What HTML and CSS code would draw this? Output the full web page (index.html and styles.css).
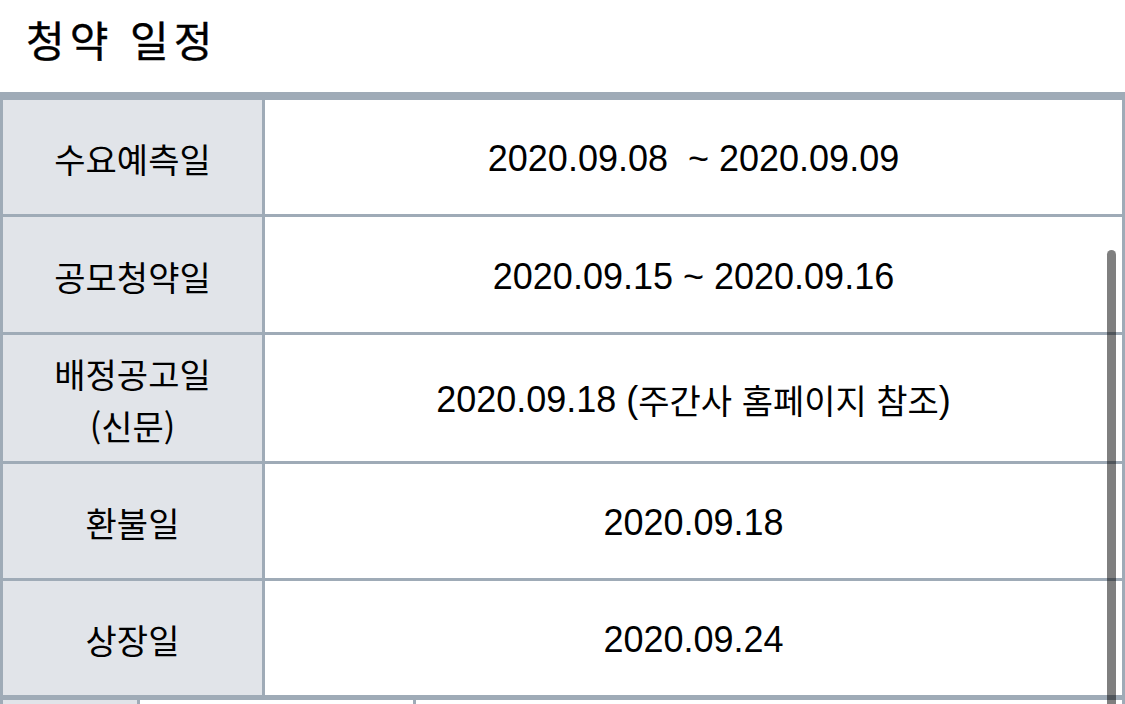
FILE: index.html
```html
<!DOCTYPE html>
<html lang="ko">
<head>
<meta charset="utf-8">
<title>청약 일정</title>
<link rel="stylesheet" href="styles.css">
</head>
<body>
<h1 class="title">청약 일정</h1>
<div class="schedule">
  <div class="cell label r1">수요예측일</div>
  <div class="cell value r1">2020.09.08&nbsp; ~ 2020.09.09</div>
  <div class="cell label r2">공모청약일</div>
  <div class="cell value r2">2020.09.15 ~ 2020.09.16</div>
  <div class="cell label r3">배정공고일<br>(신문)</div>
  <div class="cell value r3">2020.09.18 (<span class="ko">주간사 홈페이지 참조</span>)</div>
  <div class="cell label r4">환불일</div>
  <div class="cell value r4">2020.09.18</div>
  <div class="cell label r5">상장일</div>
  <div class="cell value r5">2020.09.24</div>
</div>
<div class="next">
  <div class="cell label"></div>
  <div class="cell value"></div>
  <div class="cell value"></div>
</div>
<div class="scrollbar"></div>
</body>
</html>
```

FILE: styles.css
```css
html, body {
  margin: 0;
  padding: 0;
  overflow: hidden;
  background: #ffffff;
  color: #000000;
}

.title {
  margin: 0;
  height: 92px;
  padding-left: 26px;
  font-family: "Noto Sans CJK KR", sans-serif;
  font-size: 42px;
  font-weight: 400;
  line-height: 78px;
  letter-spacing: 5px;
  -webkit-text-stroke: 0.4px #000;
}

.schedule {
  display: grid;
  grid-template-columns: 259px 1fr;
  grid-template-rows: 114px 115px 126px 114px 114px;
  gap: 3px;
  padding: 8px 3px 0 3px;
  background: #9fabb7;
}

.cell {
  display: flex;
  align-items: center;
  justify-content: center;
  text-align: center;
  padding-top: 4px;
  box-sizing: border-box;
  line-height: 52px;
}

.label {
  background: #e1e4e9;
  font-family: "Noto Sans CJK KR", sans-serif;
  font-size: 34px;
  letter-spacing: 0;
}

.value {
  background: #ffffff;
  font-family: "Liberation Sans", "Noto Sans CJK KR", sans-serif;
  font-size: 36px;
}

.ko {
  font-family: "Noto Sans CJK KR", sans-serif;
  font-size: 34px;
}

.next {
  display: grid;
  grid-template-columns: 134px 273px 1fr;
  grid-template-rows: 114px;
  gap: 3px;
  padding: 5px 3px 0 3px;
  background: #9fabb7;
}

.scrollbar {
  position: absolute;
  left: 1107px;
  top: 250px;
  width: 9px;
  height: 470px;
  border-radius: 4.5px;
  background: rgba(0, 0, 0, 0.5);
}
```
